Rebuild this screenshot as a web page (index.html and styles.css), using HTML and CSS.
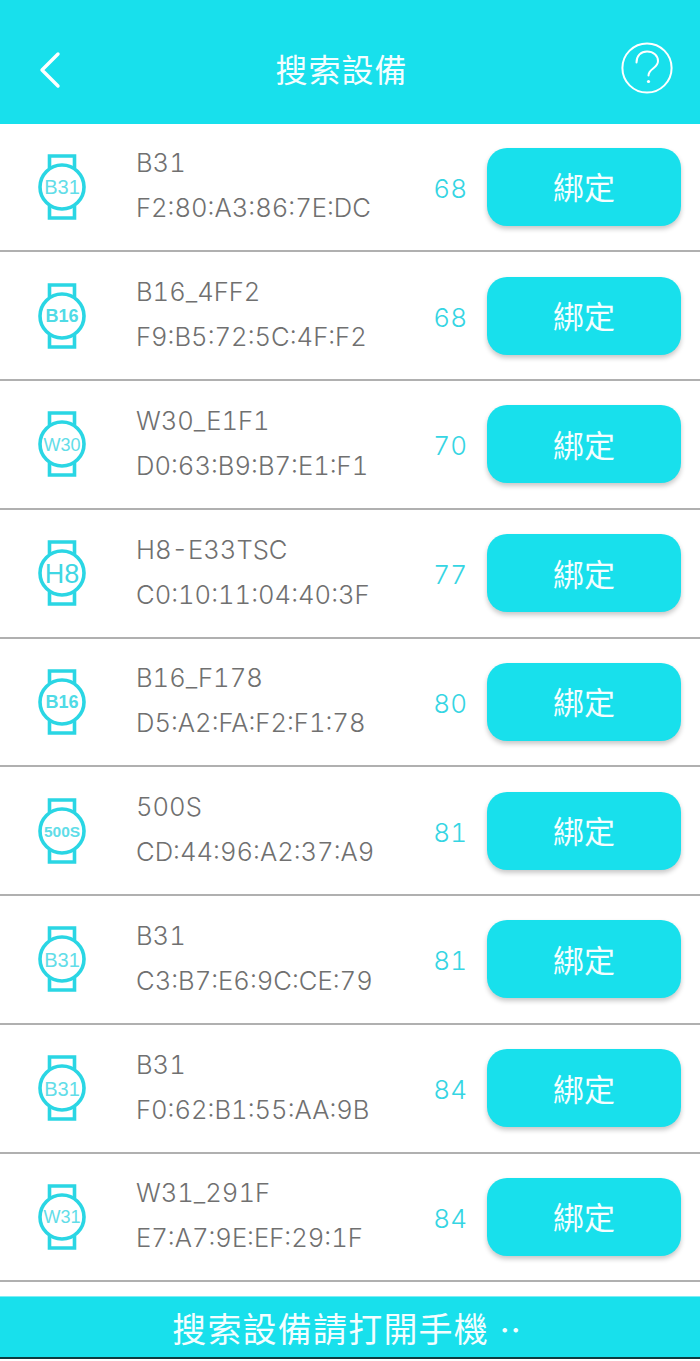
FILE: index.html
```html
<!DOCTYPE html>
<html lang="zh-Hant">
<head>
<meta charset="utf-8">
<title>搜索設備</title>
<link rel="stylesheet" href="styles.css">
</head>
<body>
<div class="app">
  <header class="top">
    <svg class="back" viewBox="0 0 24 38" width="24" height="38"><path d="M20 3 L4 19 L20 35" fill="none" stroke="#fff" stroke-width="3.4" stroke-linecap="round" stroke-linejoin="round"/></svg>
    <h1 class="title">搜索設備</h1>
    <svg class="help" viewBox="0 0 52 52" width="52" height="52"><circle cx="26" cy="26" r="24.6" fill="none" stroke="#fff" stroke-width="2"/><path d="M15.5 20.5 C15.5 13.5 20 9.5 26 9.5 C32.5 9.5 37 13.5 37 19 C37 26.5 27.5 26.5 27.5 33.5" fill="none" stroke="#fff" stroke-width="2" stroke-linecap="round"/><circle cx="27.5" cy="39.5" r="1.6" fill="#fff"/></svg>
  </header>
  <main class="list">
    <div class="row"><div class="watch"><svg viewBox="0 0 48 66" width="48" height="66"><use href="#w"/></svg><span class="mark">B31</span></div><div class="info"><span>B31</span><span>F2:80:A3:86:7E:DC</span></div><span class="rssi">68</span><button class="bind">綁定</button></div>
    <div class="row"><div class="watch"><svg viewBox="0 0 48 66" width="48" height="66"><use href="#w"/></svg><span class="mark bold">B16</span></div><div class="info"><span>B16_4FF2</span><span>F9:B5:72:5C:4F:F2</span></div><span class="rssi">68</span><button class="bind">綁定</button></div>
    <div class="row"><div class="watch"><svg viewBox="0 0 48 66" width="48" height="66"><use href="#w"/></svg><span class="mark narrow">W30</span></div><div class="info"><span>W30_E1F1</span><span>D0:63:B9:B7:E1:F1</span></div><span class="rssi">70</span><button class="bind">綁定</button></div>
    <div class="row"><div class="watch"><svg viewBox="0 0 48 66" width="48" height="66"><use href="#w"/></svg><span class="mark big">H8</span></div><div class="info"><span>H8-E33TSC</span><span>C0:10:11:04:40:3F</span></div><span class="rssi">77</span><button class="bind">綁定</button></div>
    <div class="row"><div class="watch"><svg viewBox="0 0 48 66" width="48" height="66"><use href="#w"/></svg><span class="mark bold">B16</span></div><div class="info"><span>B16_F178</span><span>D5:A2:FA:F2:F1:78</span></div><span class="rssi">80</span><button class="bind">綁定</button></div>
    <div class="row"><div class="watch"><svg viewBox="0 0 48 66" width="48" height="66"><use href="#w"/></svg><span class="mark small">500S</span></div><div class="info"><span>500S</span><span>CD:44:96:A2:37:A9</span></div><span class="rssi">81</span><button class="bind">綁定</button></div>
    <div class="row"><div class="watch"><svg viewBox="0 0 48 66" width="48" height="66"><use href="#w"/></svg><span class="mark">B31</span></div><div class="info"><span>B31</span><span>C3:B7:E6:9C:CE:79</span></div><span class="rssi">81</span><button class="bind">綁定</button></div>
    <div class="row"><div class="watch"><svg viewBox="0 0 48 66" width="48" height="66"><use href="#w"/></svg><span class="mark">B31</span></div><div class="info"><span>B31</span><span>F0:62:B1:55:AA:9B</span></div><span class="rssi">84</span><button class="bind">綁定</button></div>
    <div class="row"><div class="watch"><svg viewBox="0 0 48 66" width="48" height="66"><use href="#w"/></svg><span class="mark narrow">W31</span></div><div class="info"><span>W31_291F</span><span>E7:A7:9E:EF:29:1F</span></div><span class="rssi">84</span><button class="bind">綁定</button></div>
  </main>
  <footer class="bottom">搜索設備請打開手機 ··</footer>
</div>
<svg class="defs" width="0" height="0"><defs><g id="w" fill="none" stroke="#2ad6e4" stroke-width="3.6"><path d="M11.5 14 V2 H36.5 V14"/><path d="M11.5 52 V64 H36.5 V52"/><circle cx="24" cy="33" r="22"/></g></defs></svg>
</body>
</html>
```
FILE: styles.css
```css
* { box-sizing: border-box; }
html, body { margin: 0; padding: 0; background: #fff; }
.app {
  width: 700px;
  height: 1361px;
  display: flex;
  flex-direction: column;
  font-family: Inter, "Noto Sans CJK TC", sans-serif;
  font-variant-numeric: tabular-nums;
  overflow: hidden;
}
.top {
  height: 124px;
  flex: none;
  background: #18e0ec;
  display: flex;
  align-items: center;
  justify-content: space-between;
  padding: 12px 27px 0 38px;
}
.back { margin-top: 4px; }
.help { margin-top: -1px; }
.title {
  margin: 0;
  font: 400 32px "Noto Sans CJK TC", sans-serif;
  color: #f4feff;
  letter-spacing: 1px;
}
.list { flex: none; height: 1172px; margin-top: -.5px; }
.row {
  height: 128.75px;
  display: flex;
  align-items: center;
  border-bottom: 2px solid #b0b0b0;
  padding-right: 19px;
}
.watch {
  width: 48px;
  height: 66px;
  margin-left: 38px;
  position: relative;
  flex: none;
  display: flex;
  align-items: center;
  justify-content: center;
}
.watch svg { position: absolute; inset: 0; }
.mark { position: relative; top: 1px; font: 400 20px "Liberation Sans", sans-serif; color: #62dde8; }
.mark.narrow { font-size: 18px; }
.mark.bold { font-size: 18px; font-weight: 700; color: #4fdbe6; }
.mark.big { font-size: 27px; color: #3fd7e4; }
.mark.small { font-size: 15.5px; font-weight: 700; color: #5fdde8; }
.info {
  margin-left: 50px;
  flex: 1;
  display: flex;
  flex-direction: column;
  gap: 9px;
  font-size: 25.6px;
  font-weight: 300;
  line-height: 36px;
  color: #707070;
  position: relative;
  top: -1px;
}
.rssi { font-size: 26px; font-weight: 300; color: #35d5e3; margin-right: 20px; padding-top: 3px; }
.bind {
  width: 194px;
  height: 78px;
  border: 0;
  border-radius: 20px;
  background: #18e0ec;
  box-shadow: 0 3px 5px rgba(0, 0, 0, .22);
  color: #f4feff;
  font: 400 31px "Noto Sans CJK TC", sans-serif;
  padding: 0 0 2px;
}
.bottom {
  height: 63px;
  flex: none;
  background: #18e0ec;
  border-top: 1px solid #7eeef5;
  border-bottom: 2px solid #0b3b40;
  color: #f4feff;
  font: 400 34px/60px Inter, "Noto Sans CJK TC", sans-serif;
  letter-spacing: 1.2px;
  text-align: center;
  padding: 3px 6px 0 0;
}
.defs { position: absolute; }
```
